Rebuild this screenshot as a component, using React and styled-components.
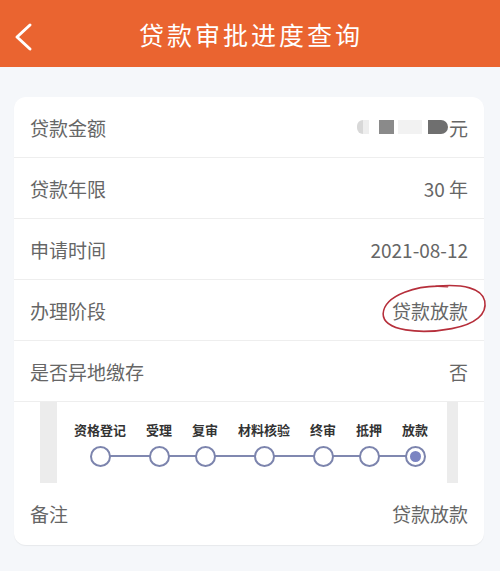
import React from 'react'
import styled, { createGlobalStyle } from 'styled-components'

const Global = createGlobalStyle`
  body {
    margin: 0;
    background: #f5f7fa;
    font-family: "Noto Sans CJK SC", "Noto Sans", sans-serif;
  }
`

const steps = ['资格登记', '受理', '复审', '材料核验', '终审', '抵押', '放款']

const App = () => {
  return (
    <Page>
      <Global />
      <Header>
        <Back>
          <svg width="20" height="30" viewBox="0 0 20 30">
            <path d="M17 3 L4 15 L17 27" fill="none" stroke="#fff" strokeWidth="3" strokeLinecap="round" strokeLinejoin="round" />
          </svg>
        </Back>
        <Title>贷款审批进度查询</Title>
      </Header>
      <Body>
        <Card>
          <Row>
            <Label>贷款金额</Label>
            <Value>
              <Mask>
                <Blot w={6} c="#d8d8d8" r="6px 0 0 6px" />
                <Blot w={6} c="#eeeeee" />
                <Gap w={10} />
                <Blot w={15} c="#8a8a8a" />
                <Gap w={4} />
                <Blot w={24} c="#f2f2f2" />
                <Gap w={6} />
                <Blot w={20} c="#6f6f6f" r="0 8px 8px 0" />
              </Mask>
              元
            </Value>
          </Row>
          <Row>
            <Label>贷款年限</Label>
            <Value>30 年</Value>
          </Row>
          <Row>
            <Label>申请时间</Label>
            <Value>2021-08-12</Value>
          </Row>
          <Row>
            <Label>办理阶段</Label>
            <Value>
              <Circled>
                贷款放款
                <Ring viewBox="0 0 110 50" preserveAspectRatio="none">
                  <path
                    d="M70 5 C40 1 5 10 3 27 C2 43 40 48 72 44 C97 41 109 32 107 20 C105 8 86 3 58 4"
                    fill="none"
                    stroke="#b62f3b"
                    strokeWidth="1.6"
                    strokeLinecap="round"
                  />
                </Ring>
              </Circled>
            </Value>
          </Row>
          <Row>
            <Label>是否异地缴存</Label>
            <Value>否</Value>
          </Row>
          <ProgressRow>
            <SideBar w={17} />
            <Stage>
              <Steps>
                <Line />
                {steps.map((s, i) => (
                  <Step key={s}>
                    <StepLabel>{s}</StepLabel>
                    <Dot active={i === steps.length - 1} />
                  </Step>
                ))}
              </Steps>
            </Stage>
            <SideBar w={11} />
          </ProgressRow>
          <Row last>
            <Label>备注</Label>
            <Value>贷款放款</Value>
          </Row>
        </Card>
      </Body>
    </Page>
  )
}

export default App

const Page = styled.div`
  width: 500px;
  height: 571px;
  background: #f5f7fa;
  overflow: hidden;
`

const Header = styled.div`
  height: 67px;
  background: #ea6430;
  display: flex;
  align-items: center;
  justify-content: center;
  position: relative;
`

const Back = styled.div`
  position: absolute;
  left: 13px;
  top: 22px;
  display: flex;
`

const Title = styled.div`
  color: #fff;
  font-size: 25px;
  letter-spacing: 3px;
  margin-left: 2px;
`

const Body = styled.div`
  padding: 30px 16px 0 14px;
`

const Card = styled.div`
  background: #fff;
  border-radius: 12px;
  box-shadow: 0 1px 1px rgba(0, 0, 0, 0.06);
  height: 448px;
`

const Row = styled.div`
  height: ${p => (p.last ? '60px' : '61px')};
  display: flex;
  align-items: center;
  justify-content: space-between;
  padding: 0 16px;
  border-bottom: ${p => (p.last ? 'none' : '1px solid #eeeeee')};
  box-sizing: border-box;
  font-size: 19px;
  color: #666;
`

const Label = styled.span``

const Value = styled.span`
  display: flex;
  align-items: center;
`

const Mask = styled.span`
  display: flex;
  align-items: center;
  margin-right: 1px;
`

const Blot = styled.span`
  display: inline-block;
  width: ${p => p.w}px;
  height: 14px;
  background: ${p => p.c};
  border-radius: ${p => p.r || '0'};
`

const Gap = styled.span`
  display: inline-block;
  width: ${p => p.w}px;
`

const Circled = styled.span`
  position: relative;
  display: inline-block;
`

const Ring = styled.svg`
  position: absolute;
  left: -12px;
  top: -15px;
  width: 108px;
  height: 54px;
  transform: rotate(-3deg);
`

const ProgressRow = styled.div`
  height: 81px;
  margin: 0 26px;
  display: flex;
`

const SideBar = styled.div`
  width: ${p => p.w}px;
  background: #ececec;
`

const Stage = styled.div`
  flex: 1;
  background: #fff;
  padding: 19px 0 0 17px;
`

const Steps = styled.div`
  position: relative;
  display: flex;
  width: fit-content;
  gap: 20px;
`

const Line = styled.div`
  position: absolute;
  left: 26px;
  right: 13px;
  top: 34px;
  height: 2px;
  background: #8088b0;
`

const Step = styled.div`
  display: flex;
  flex-direction: column;
  align-items: center;
  position: relative;
`

const StepLabel = styled.div`
  font-size: 13px;
  font-weight: 700;
  color: #333;
  line-height: 18px;
  white-space: nowrap;
`

const Dot = styled.div`
  margin-top: 7px;
  width: 17px;
  height: 17px;
  border: 2px solid #7c84ad;
  border-radius: 50%;
  background: #fff;
  display: flex;
  align-items: center;
  justify-content: center;

  &::after {
    content: '';
    display: ${p => (p.active ? 'block' : 'none')};
    width: 11px;
    height: 11px;
    border-radius: 50%;
    background: #7b84c2;
  }
`
